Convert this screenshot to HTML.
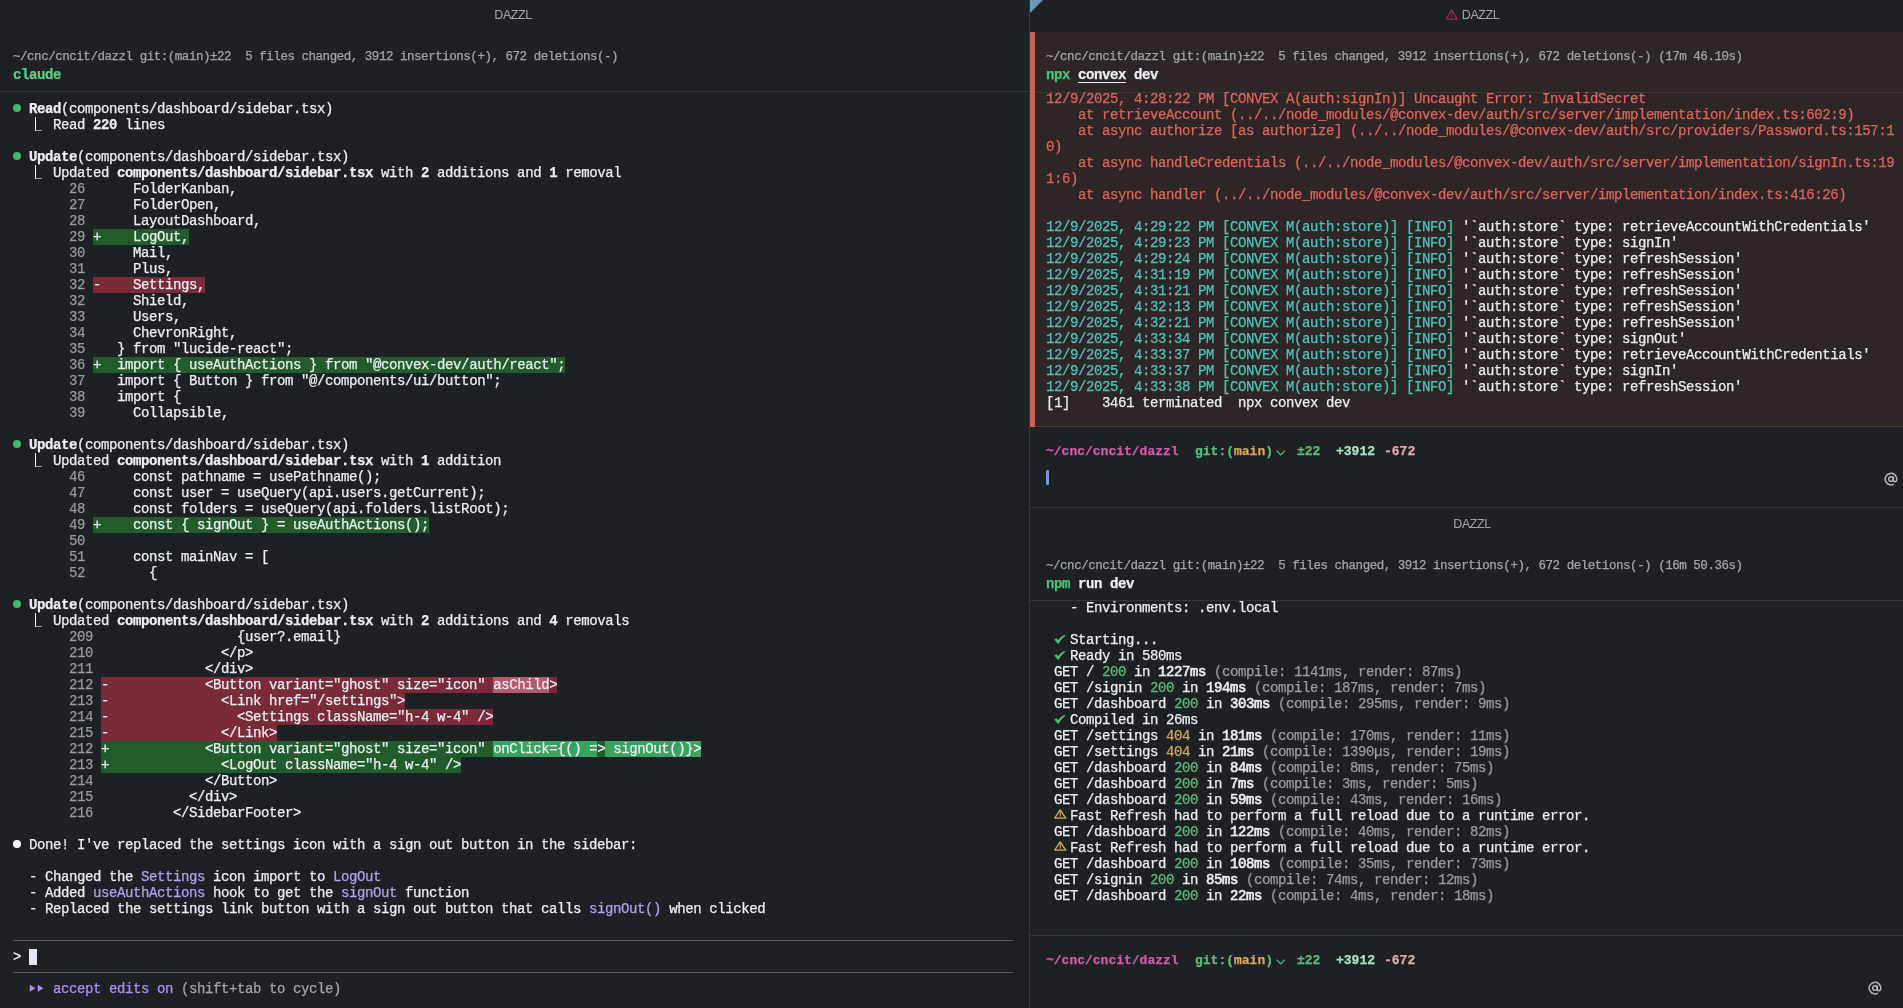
<!DOCTYPE html><html><head><meta charset="utf-8"><style>
html,body{margin:0;padding:0;background:#1e2124;width:1903px;height:1008px;overflow:hidden;}
body{position:relative;font-family:"Liberation Mono",monospace;color:#eceff4;-webkit-font-smoothing:antialiased;}
#root{position:absolute;left:0;top:0;width:1903px;height:1008px;will-change:transform;}
.t{position:absolute;white-space:pre;font-family:"Liberation Mono",monospace;-webkit-text-stroke:0.25px currentColor;}
.ttl{position:absolute;width:200px;text-align:center;font-family:"Liberation Sans",sans-serif;font-size:12.5px;line-height:16px;letter-spacing:-0.45px;color:#a3a6aa;}
.warn{display:inline-block;margin-right:4px;vertical-align:-1px;}
</style></head><body><div id="root">
<div style="position:absolute;left:1029px;top:0px;width:1px;height:1008px;background:#34373b;"></div>
<div class="ttl" style="left:413px;top:7px;">DAZZL</div>
<div class="t" style="left:13px;top:48.7px;font-size:12.5px;line-height:16px;letter-spacing:-0.465px;"><span style="color:#a3a6aa;">~/cnc/cncit/dazzl git:(main)±22  5 files changed, 3912 insertions(+), 672 deletions(-)</span></div>
<div class="t" style="left:13px;top:67.0px;font-size:14.0px;line-height:16px;letter-spacing:-0.4px;"><span style="color:#58d086;font-weight:bold;">claude</span></div>
<div style="position:absolute;left:0px;top:91px;width:1029px;height:1px;background:#34373b;"></div>
<div style="position:absolute;left:13px;top:104.3px;width:8px;height:8px;background:#48b968;border-radius:50%;"></div>
<div class="t" style="left:13px;top:101.0px;font-size:14.0px;line-height:16px;letter-spacing:-0.4px;">  <span style="color:#eceff4;font-weight:bold;">Read</span><span style="color:#eceff4;">(components/dashboard/sidebar.tsx)</span></div>
<div style="position:absolute;left:35px;top:117px;width:1px;height:14px;background:#eceff4;"></div>
<div style="position:absolute;left:36px;top:130px;width:6px;height:1px;background:#9a9ca0;"></div>
<div class="t" style="left:13px;top:117.0px;font-size:14.0px;line-height:16px;letter-spacing:-0.4px;"><span style="color:#eceff4;">     Read </span><span style="color:#eceff4;font-weight:bold;">220</span><span style="color:#eceff4;"> lines</span></div>
<div style="position:absolute;left:13px;top:152.3px;width:8px;height:8px;background:#48b968;border-radius:50%;"></div>
<div class="t" style="left:13px;top:149.0px;font-size:14.0px;line-height:16px;letter-spacing:-0.4px;">  <span style="color:#eceff4;font-weight:bold;">Update</span><span style="color:#eceff4;">(components/dashboard/sidebar.tsx)</span></div>
<div style="position:absolute;left:35px;top:165px;width:1px;height:14px;background:#eceff4;"></div>
<div style="position:absolute;left:36px;top:178px;width:6px;height:1px;background:#9a9ca0;"></div>
<div class="t" style="left:13px;top:165.0px;font-size:14.0px;line-height:16px;letter-spacing:-0.4px;"><span style="color:#eceff4;">     Updated </span><span style="color:#eceff4;font-weight:bold;">components/dashboard/sidebar.tsx</span><span style="color:#eceff4;"> with </span><span style="color:#eceff4;font-weight:bold;">2</span><span style="color:#eceff4;"> additions and </span><span style="color:#eceff4;font-weight:bold;">1</span><span style="color:#eceff4;"> removal</span></div>
<div class="t" style="left:13px;top:181.0px;font-size:14.0px;line-height:16px;letter-spacing:-0.4px;">       <span style="color:#9a9b9d;">26</span> <span style="color:#eceff4;"> </span><span style="color:#eceff4;">    FolderKanban,</span></div>
<div class="t" style="left:13px;top:197.0px;font-size:14.0px;line-height:16px;letter-spacing:-0.4px;">       <span style="color:#9a9b9d;">27</span> <span style="color:#eceff4;"> </span><span style="color:#eceff4;">    FolderOpen,</span></div>
<div class="t" style="left:13px;top:213.0px;font-size:14.0px;line-height:16px;letter-spacing:-0.4px;">       <span style="color:#9a9b9d;">28</span> <span style="color:#eceff4;"> </span><span style="color:#eceff4;">    LayoutDashboard,</span></div>
<div style="position:absolute;left:93.0px;top:229px;width:96.0px;height:16px;background:#225c2c;"></div>
<div class="t" style="left:13px;top:229.0px;font-size:14.0px;line-height:16px;letter-spacing:-0.4px;">       <span style="color:#9a9b9d;">29</span> <span style="color:#eceff4;">+</span><span style="color:#eceff4;">    LogOut,</span></div>
<div class="t" style="left:13px;top:245.0px;font-size:14.0px;line-height:16px;letter-spacing:-0.4px;">       <span style="color:#9a9b9d;">30</span> <span style="color:#eceff4;"> </span><span style="color:#eceff4;">    Mail,</span></div>
<div class="t" style="left:13px;top:261.0px;font-size:14.0px;line-height:16px;letter-spacing:-0.4px;">       <span style="color:#9a9b9d;">31</span> <span style="color:#eceff4;"> </span><span style="color:#eceff4;">    Plus,</span></div>
<div style="position:absolute;left:93.0px;top:277px;width:112.0px;height:16px;background:#7b2a37;"></div>
<div class="t" style="left:13px;top:277.0px;font-size:14.0px;line-height:16px;letter-spacing:-0.4px;">       <span style="color:#9a9b9d;">32</span> <span style="color:#eceff4;">-</span><span style="color:#eceff4;">    Settings,</span></div>
<div class="t" style="left:13px;top:293.0px;font-size:14.0px;line-height:16px;letter-spacing:-0.4px;">       <span style="color:#9a9b9d;">32</span> <span style="color:#eceff4;"> </span><span style="color:#eceff4;">    Shield,</span></div>
<div class="t" style="left:13px;top:309.0px;font-size:14.0px;line-height:16px;letter-spacing:-0.4px;">       <span style="color:#9a9b9d;">33</span> <span style="color:#eceff4;"> </span><span style="color:#eceff4;">    Users,</span></div>
<div class="t" style="left:13px;top:325.0px;font-size:14.0px;line-height:16px;letter-spacing:-0.4px;">       <span style="color:#9a9b9d;">34</span> <span style="color:#eceff4;"> </span><span style="color:#eceff4;">    ChevronRight,</span></div>
<div class="t" style="left:13px;top:341.0px;font-size:14.0px;line-height:16px;letter-spacing:-0.4px;">       <span style="color:#9a9b9d;">35</span> <span style="color:#eceff4;"> </span><span style="color:#eceff4;">  } from "lucide-react";</span></div>
<div style="position:absolute;left:93.0px;top:357px;width:472.0px;height:16px;background:#225c2c;"></div>
<div class="t" style="left:13px;top:357.0px;font-size:14.0px;line-height:16px;letter-spacing:-0.4px;">       <span style="color:#9a9b9d;">36</span> <span style="color:#eceff4;">+</span><span style="color:#eceff4;">  import { useAuthActions } from "@convex-dev/auth/react";</span></div>
<div class="t" style="left:13px;top:373.0px;font-size:14.0px;line-height:16px;letter-spacing:-0.4px;">       <span style="color:#9a9b9d;">37</span> <span style="color:#eceff4;"> </span><span style="color:#eceff4;">  import { Button } from "@/components/ui/button";</span></div>
<div class="t" style="left:13px;top:389.0px;font-size:14.0px;line-height:16px;letter-spacing:-0.4px;">       <span style="color:#9a9b9d;">38</span> <span style="color:#eceff4;"> </span><span style="color:#eceff4;">  import {</span></div>
<div class="t" style="left:13px;top:405.0px;font-size:14.0px;line-height:16px;letter-spacing:-0.4px;">       <span style="color:#9a9b9d;">39</span> <span style="color:#eceff4;"> </span><span style="color:#eceff4;">    Collapsible,</span></div>
<div style="position:absolute;left:13px;top:440.3px;width:8px;height:8px;background:#48b968;border-radius:50%;"></div>
<div class="t" style="left:13px;top:437.0px;font-size:14.0px;line-height:16px;letter-spacing:-0.4px;">  <span style="color:#eceff4;font-weight:bold;">Update</span><span style="color:#eceff4;">(components/dashboard/sidebar.tsx)</span></div>
<div style="position:absolute;left:35px;top:453px;width:1px;height:14px;background:#eceff4;"></div>
<div style="position:absolute;left:36px;top:466px;width:6px;height:1px;background:#9a9ca0;"></div>
<div class="t" style="left:13px;top:453.0px;font-size:14.0px;line-height:16px;letter-spacing:-0.4px;"><span style="color:#eceff4;">     Updated </span><span style="color:#eceff4;font-weight:bold;">components/dashboard/sidebar.tsx</span><span style="color:#eceff4;"> with </span><span style="color:#eceff4;font-weight:bold;">1</span><span style="color:#eceff4;"> addition</span></div>
<div class="t" style="left:13px;top:469.0px;font-size:14.0px;line-height:16px;letter-spacing:-0.4px;">       <span style="color:#9a9b9d;">46</span> <span style="color:#eceff4;"> </span><span style="color:#eceff4;">    const pathname = usePathname();</span></div>
<div class="t" style="left:13px;top:485.0px;font-size:14.0px;line-height:16px;letter-spacing:-0.4px;">       <span style="color:#9a9b9d;">47</span> <span style="color:#eceff4;"> </span><span style="color:#eceff4;">    const user = useQuery(api.users.getCurrent);</span></div>
<div class="t" style="left:13px;top:501.0px;font-size:14.0px;line-height:16px;letter-spacing:-0.4px;">       <span style="color:#9a9b9d;">48</span> <span style="color:#eceff4;"> </span><span style="color:#eceff4;">    const folders = useQuery(api.folders.listRoot);</span></div>
<div style="position:absolute;left:93.0px;top:517px;width:336.0px;height:16px;background:#225c2c;"></div>
<div class="t" style="left:13px;top:517.0px;font-size:14.0px;line-height:16px;letter-spacing:-0.4px;">       <span style="color:#9a9b9d;">49</span> <span style="color:#eceff4;">+</span><span style="color:#eceff4;">    const { signOut } = useAuthActions();</span></div>
<div class="t" style="left:13px;top:533.0px;font-size:14.0px;line-height:16px;letter-spacing:-0.4px;">       <span style="color:#9a9b9d;">50</span> <span style="color:#eceff4;"> </span><span style="color:#eceff4;"></span></div>
<div class="t" style="left:13px;top:549.0px;font-size:14.0px;line-height:16px;letter-spacing:-0.4px;">       <span style="color:#9a9b9d;">51</span> <span style="color:#eceff4;"> </span><span style="color:#eceff4;">    const mainNav = [</span></div>
<div class="t" style="left:13px;top:565.0px;font-size:14.0px;line-height:16px;letter-spacing:-0.4px;">       <span style="color:#9a9b9d;">52</span> <span style="color:#eceff4;"> </span><span style="color:#eceff4;">      {</span></div>
<div style="position:absolute;left:13px;top:600.3px;width:8px;height:8px;background:#48b968;border-radius:50%;"></div>
<div class="t" style="left:13px;top:597.0px;font-size:14.0px;line-height:16px;letter-spacing:-0.4px;">  <span style="color:#eceff4;font-weight:bold;">Update</span><span style="color:#eceff4;">(components/dashboard/sidebar.tsx)</span></div>
<div style="position:absolute;left:35px;top:613px;width:1px;height:14px;background:#eceff4;"></div>
<div style="position:absolute;left:36px;top:626px;width:6px;height:1px;background:#9a9ca0;"></div>
<div class="t" style="left:13px;top:613.0px;font-size:14.0px;line-height:16px;letter-spacing:-0.4px;"><span style="color:#eceff4;">     Updated </span><span style="color:#eceff4;font-weight:bold;">components/dashboard/sidebar.tsx</span><span style="color:#eceff4;"> with </span><span style="color:#eceff4;font-weight:bold;">2</span><span style="color:#eceff4;"> additions and </span><span style="color:#eceff4;font-weight:bold;">4</span><span style="color:#eceff4;"> removals</span></div>
<div class="t" style="left:13px;top:629.0px;font-size:14.0px;line-height:16px;letter-spacing:-0.4px;">       <span style="color:#9a9b9d;">209</span> <span style="color:#eceff4;"> </span><span style="color:#eceff4;">                {user?.email}</span></div>
<div class="t" style="left:13px;top:645.0px;font-size:14.0px;line-height:16px;letter-spacing:-0.4px;">       <span style="color:#9a9b9d;">210</span> <span style="color:#eceff4;"> </span><span style="color:#eceff4;">              &lt;/p&gt;</span></div>
<div class="t" style="left:13px;top:661.0px;font-size:14.0px;line-height:16px;letter-spacing:-0.4px;">       <span style="color:#9a9b9d;">211</span> <span style="color:#eceff4;"> </span><span style="color:#eceff4;">            &lt;/div&gt;</span></div>
<div style="position:absolute;left:101.0px;top:677px;width:456.0px;height:16px;background:#7b2a37;"></div>
<div style="position:absolute;left:493.0px;top:677px;width:56.0px;height:16px;background:#b65b6b;"></div>
<div class="t" style="left:13px;top:677.0px;font-size:14.0px;line-height:16px;letter-spacing:-0.4px;">       <span style="color:#9a9b9d;">212</span> <span style="color:#eceff4;">-</span><span style="color:#eceff4;">            &lt;Button variant="ghost" size="icon" asChild&gt;</span></div>
<div style="position:absolute;left:101.0px;top:693px;width:304.0px;height:16px;background:#7b2a37;"></div>
<div class="t" style="left:13px;top:693.0px;font-size:14.0px;line-height:16px;letter-spacing:-0.4px;">       <span style="color:#9a9b9d;">213</span> <span style="color:#eceff4;">-</span><span style="color:#eceff4;">              &lt;Link href="/settings"&gt;</span></div>
<div style="position:absolute;left:101.0px;top:709px;width:392.0px;height:16px;background:#7b2a37;"></div>
<div class="t" style="left:13px;top:709.0px;font-size:14.0px;line-height:16px;letter-spacing:-0.4px;">       <span style="color:#9a9b9d;">214</span> <span style="color:#eceff4;">-</span><span style="color:#eceff4;">                &lt;Settings className="h-4 w-4" /&gt;</span></div>
<div style="position:absolute;left:101.0px;top:725px;width:176.0px;height:16px;background:#7b2a37;"></div>
<div class="t" style="left:13px;top:725.0px;font-size:14.0px;line-height:16px;letter-spacing:-0.4px;">       <span style="color:#9a9b9d;">215</span> <span style="color:#eceff4;">-</span><span style="color:#eceff4;">              &lt;/Link&gt;</span></div>
<div style="position:absolute;left:101.0px;top:741px;width:600.0px;height:16px;background:#225c2c;"></div>
<div style="position:absolute;left:493.0px;top:741px;width:104.0px;height:16px;background:#38a35e;"></div>
<div style="position:absolute;left:605.0px;top:741px;width:96.0px;height:16px;background:#38a35e;"></div>
<div class="t" style="left:13px;top:741.0px;font-size:14.0px;line-height:16px;letter-spacing:-0.4px;">       <span style="color:#9a9b9d;">212</span> <span style="color:#eceff4;">+</span><span style="color:#eceff4;">            &lt;Button variant="ghost" size="icon" onClick={() =&gt; signOut()}&gt;</span></div>
<div style="position:absolute;left:101.0px;top:757px;width:360.0px;height:16px;background:#225c2c;"></div>
<div class="t" style="left:13px;top:757.0px;font-size:14.0px;line-height:16px;letter-spacing:-0.4px;">       <span style="color:#9a9b9d;">213</span> <span style="color:#eceff4;">+</span><span style="color:#eceff4;">              &lt;LogOut className="h-4 w-4" /&gt;</span></div>
<div class="t" style="left:13px;top:773.0px;font-size:14.0px;line-height:16px;letter-spacing:-0.4px;">       <span style="color:#9a9b9d;">214</span> <span style="color:#eceff4;"> </span><span style="color:#eceff4;">            &lt;/Button&gt;</span></div>
<div class="t" style="left:13px;top:789.0px;font-size:14.0px;line-height:16px;letter-spacing:-0.4px;">       <span style="color:#9a9b9d;">215</span> <span style="color:#eceff4;"> </span><span style="color:#eceff4;">          &lt;/div&gt;</span></div>
<div class="t" style="left:13px;top:805.0px;font-size:14.0px;line-height:16px;letter-spacing:-0.4px;">       <span style="color:#9a9b9d;">216</span> <span style="color:#eceff4;"> </span><span style="color:#eceff4;">        &lt;/SidebarFooter&gt;</span></div>
<div style="position:absolute;left:13px;top:840.3px;width:8px;height:8px;background:#ffffff;border-radius:50%;"></div>
<div class="t" style="left:13px;top:837.0px;font-size:14.0px;line-height:16px;letter-spacing:-0.4px;"><span style="color:#eceff4;">  Done! I've replaced the settings icon with a sign out button in the sidebar:</span></div>
<div class="t" style="left:13px;top:869.0px;font-size:14.0px;line-height:16px;letter-spacing:-0.4px;"><span style="color:#eceff4;">  - Changed the </span><span style="color:#aaa5f2;">Settings</span><span style="color:#eceff4;"> icon import to </span><span style="color:#aaa5f2;">LogOut</span></div>
<div class="t" style="left:13px;top:885.0px;font-size:14.0px;line-height:16px;letter-spacing:-0.4px;"><span style="color:#eceff4;">  - Added </span><span style="color:#aaa5f2;">useAuthActions</span><span style="color:#eceff4;"> hook to get the </span><span style="color:#aaa5f2;">signOut</span><span style="color:#eceff4;"> function</span></div>
<div class="t" style="left:13px;top:901.0px;font-size:14.0px;line-height:16px;letter-spacing:-0.4px;"><span style="color:#eceff4;">  - Replaced the settings link button with a sign out button that calls </span><span style="color:#aaa5f2;">signOut()</span><span style="color:#eceff4;"> when clicked</span></div>
<div style="position:absolute;left:13px;top:940px;width:1000px;height:1px;background:#5a5d61;"></div>
<div style="position:absolute;left:13px;top:972px;width:1000px;height:1px;background:#5a5d61;"></div>
<div class="t" style="left:13px;top:949.0px;font-size:14.0px;line-height:16px;letter-spacing:-0.4px;"><span style="color:#eceff4;">&gt;</span></div>
<div style="position:absolute;left:29px;top:949px;width:8px;height:16px;background:#e2eaf7;"></div>
<svg style="position:absolute;left:29px;top:984px" width="16" height="9"><path d="M0.8,0.8 L6.5,4.2 L0.8,7.8 Z M8.8,0.8 L14.5,4.2 L8.8,7.8 Z" fill="#b48cf8"/></svg>
<div class="t" style="left:13px;top:981.0px;font-size:14.0px;line-height:16px;letter-spacing:-0.4px;">     <span style="color:#b48cf8;">accept edits on</span><span style="color:#a3a6aa;"> (shift+tab to cycle)</span></div>
<div class="ttl" style="left:1372px;top:7px;"><svg class="warn" width="13" height="12" viewBox="0 0 13 12"><path d="M6.6,1.9 L12.1,11.2 L1.1,11.2 Z" fill="none" stroke="#a3293b" stroke-width="1.3" stroke-linejoin="round"/><rect x="6.1" y="4.8" width="1" height="3.2" fill="#a3293b"/><rect x="6.1" y="8.8" width="1" height="1" fill="#a3293b"/></svg>DAZZL</div>
<svg style="position:absolute;left:1030px;top:0" width="14" height="14"><polygon points="0,0 13,0 0,13" fill="#6e97ba"/></svg>
<div style="position:absolute;left:1030px;top:32px;width:873px;height:395px;background:#2e2526;"></div>
<div style="position:absolute;left:1030px;top:32px;width:5px;height:395px;background:#c96357;"></div>
<div class="t" style="left:1046px;top:48.7px;font-size:12.5px;line-height:16px;letter-spacing:-0.465px;"><span style="color:#a3a6aa;">~/cnc/cncit/dazzl git:(main)±22  5 files changed, 3912 insertions(+), 672 deletions(-) (17m 46.10s)</span></div>
<div class="t" style="left:1046px;top:67.0px;font-size:14.0px;line-height:16px;letter-spacing:-0.4px;"><span style="color:#50c27c;font-weight:bold;">npx</span> <span style="color:#eceff4;font-weight:bold;text-decoration:underline;text-underline-offset:3px;">convex</span><span style="color:#eceff4;font-weight:bold;"> dev</span></div>
<div style="position:absolute;left:1035px;top:92px;width:868px;height:1px;background:#3d3536;"></div>
<div class="t" style="left:1046px;top:91.0px;font-size:14.0px;line-height:16px;letter-spacing:-0.4px;"><span style="color:#da6a5e;">12/9/2025, 4:28:22 PM [CONVEX A(auth:signIn)] Uncaught Error: InvalidSecret</span></div>
<div class="t" style="left:1046px;top:107.0px;font-size:14.0px;line-height:16px;letter-spacing:-0.4px;"><span style="color:#da6a5e;">    at retrieveAccount (../../node_modules/@convex-dev/auth/src/server/implementation/index.ts:602:9)</span></div>
<div class="t" style="left:1046px;top:123.0px;font-size:14.0px;line-height:16px;letter-spacing:-0.4px;"><span style="color:#da6a5e;">    at async authorize [as authorize] (../../node_modules/@convex-dev/auth/src/providers/Password.ts:157:1</span></div>
<div class="t" style="left:1046px;top:139.0px;font-size:14.0px;line-height:16px;letter-spacing:-0.4px;"><span style="color:#da6a5e;">0)</span></div>
<div class="t" style="left:1046px;top:155.0px;font-size:14.0px;line-height:16px;letter-spacing:-0.4px;"><span style="color:#da6a5e;">    at async handleCredentials (../../node_modules/@convex-dev/auth/src/server/implementation/signIn.ts:19</span></div>
<div class="t" style="left:1046px;top:171.0px;font-size:14.0px;line-height:16px;letter-spacing:-0.4px;"><span style="color:#da6a5e;">1:6)</span></div>
<div class="t" style="left:1046px;top:187.0px;font-size:14.0px;line-height:16px;letter-spacing:-0.4px;"><span style="color:#da6a5e;">    at async handler (../../node_modules/@convex-dev/auth/src/server/implementation/index.ts:416:26)</span></div>
<div class="t" style="left:1046px;top:219.0px;font-size:14.0px;line-height:16px;letter-spacing:-0.4px;"><span style="color:#50c5bb;">12/9/2025, 4:29:22 PM [CONVEX M(auth:store)] [INFO] </span><span style="color:#eceff4;">'`auth:store` type: retrieveAccountWithCredentials'</span></div>
<div class="t" style="left:1046px;top:235.0px;font-size:14.0px;line-height:16px;letter-spacing:-0.4px;"><span style="color:#50c5bb;">12/9/2025, 4:29:23 PM [CONVEX M(auth:store)] [INFO] </span><span style="color:#eceff4;">'`auth:store` type: signIn'</span></div>
<div class="t" style="left:1046px;top:251.0px;font-size:14.0px;line-height:16px;letter-spacing:-0.4px;"><span style="color:#50c5bb;">12/9/2025, 4:29:24 PM [CONVEX M(auth:store)] [INFO] </span><span style="color:#eceff4;">'`auth:store` type: refreshSession'</span></div>
<div class="t" style="left:1046px;top:267.0px;font-size:14.0px;line-height:16px;letter-spacing:-0.4px;"><span style="color:#50c5bb;">12/9/2025, 4:31:19 PM [CONVEX M(auth:store)] [INFO] </span><span style="color:#eceff4;">'`auth:store` type: refreshSession'</span></div>
<div class="t" style="left:1046px;top:283.0px;font-size:14.0px;line-height:16px;letter-spacing:-0.4px;"><span style="color:#50c5bb;">12/9/2025, 4:31:21 PM [CONVEX M(auth:store)] [INFO] </span><span style="color:#eceff4;">'`auth:store` type: refreshSession'</span></div>
<div class="t" style="left:1046px;top:299.0px;font-size:14.0px;line-height:16px;letter-spacing:-0.4px;"><span style="color:#50c5bb;">12/9/2025, 4:32:13 PM [CONVEX M(auth:store)] [INFO] </span><span style="color:#eceff4;">'`auth:store` type: refreshSession'</span></div>
<div class="t" style="left:1046px;top:315.0px;font-size:14.0px;line-height:16px;letter-spacing:-0.4px;"><span style="color:#50c5bb;">12/9/2025, 4:32:21 PM [CONVEX M(auth:store)] [INFO] </span><span style="color:#eceff4;">'`auth:store` type: refreshSession'</span></div>
<div class="t" style="left:1046px;top:331.0px;font-size:14.0px;line-height:16px;letter-spacing:-0.4px;"><span style="color:#50c5bb;">12/9/2025, 4:33:34 PM [CONVEX M(auth:store)] [INFO] </span><span style="color:#eceff4;">'`auth:store` type: signOut'</span></div>
<div class="t" style="left:1046px;top:347.0px;font-size:14.0px;line-height:16px;letter-spacing:-0.4px;"><span style="color:#50c5bb;">12/9/2025, 4:33:37 PM [CONVEX M(auth:store)] [INFO] </span><span style="color:#eceff4;">'`auth:store` type: retrieveAccountWithCredentials'</span></div>
<div class="t" style="left:1046px;top:363.0px;font-size:14.0px;line-height:16px;letter-spacing:-0.4px;"><span style="color:#50c5bb;">12/9/2025, 4:33:37 PM [CONVEX M(auth:store)] [INFO] </span><span style="color:#eceff4;">'`auth:store` type: signIn'</span></div>
<div class="t" style="left:1046px;top:379.0px;font-size:14.0px;line-height:16px;letter-spacing:-0.4px;"><span style="color:#50c5bb;">12/9/2025, 4:33:38 PM [CONVEX M(auth:store)] [INFO] </span><span style="color:#eceff4;">'`auth:store` type: refreshSession'</span></div>
<div class="t" style="left:1046px;top:395.0px;font-size:14.0px;line-height:16px;letter-spacing:-0.4px;"><span style="color:#eceff4;">[1]    3461 terminated  npx convex dev</span></div>
<div style="position:absolute;left:1035px;top:426px;width:868px;height:1px;background:#403738;"></div>
<div class="t" style="left:1046px;top:444.0px;font-size:13.0px;line-height:16px;letter-spacing:0px;"><span style="color:#d55aac;font-weight:bold;">~/cnc/cncit/dazzl</span></div>
<div class="t" style="left:1195px;top:444.0px;font-size:13.0px;line-height:16px;letter-spacing:0px;"><span style="color:#50c27c;font-weight:bold;">git:(</span><span style="color:#d6a85a;font-weight:bold;">main</span><span style="color:#50c27c;font-weight:bold;">)</span></div>
<svg style="position:absolute;left:1276px;top:449.5px" width="10" height="7"><polyline points="0.6,0.6 4.8,4.8 9,0.6" fill="none" stroke="#50c27c" stroke-width="1.2"/></svg>
<div class="t" style="left:1297px;top:444.0px;font-size:13.0px;line-height:16px;letter-spacing:0px;"><span style="color:#50c27c;font-weight:bold;">±22</span></div>
<div class="t" style="left:1336px;top:444.0px;font-size:13.0px;line-height:16px;letter-spacing:0px;"><span style="color:#a8e2bd;font-weight:bold;">+3912</span></div>
<div class="t" style="left:1384px;top:444.0px;font-size:13.0px;line-height:16px;letter-spacing:0px;"><span style="color:#e6a9ad;font-weight:bold;">-672</span></div>
<div style="position:absolute;left:1046px;top:470px;width:3px;height:15px;background:#6f9cc9;border-radius:1px;"></div>
<svg style="position:absolute;left:1883.5px;top:471.5px" width="14" height="14"><g fill="none" stroke="#b3b6ba" stroke-width="1.5"><circle cx="7" cy="7" r="2.3"/><path d="M9.3,4.4 V7.9 Q9.3,9.7 10.9,9.7 Q12.8,9.7 12.8,7 A5.8,5.8 0 1 0 9.8,12.2"/></g></svg>
<div style="position:absolute;left:1030px;top:507px;width:873px;height:1px;background:#34373b;"></div>
<div class="ttl" style="left:1372px;top:516px;">DAZZL</div>
<div class="t" style="left:1046px;top:557.7px;font-size:12.5px;line-height:16px;letter-spacing:-0.465px;"><span style="color:#a3a6aa;">~/cnc/cncit/dazzl git:(main)±22  5 files changed, 3912 insertions(+), 672 deletions(-) (16m 50.36s)</span></div>
<div class="t" style="left:1046px;top:576.0px;font-size:14.0px;line-height:16px;letter-spacing:-0.4px;"><span style="color:#50c27c;font-weight:bold;">npm</span><span style="color:#eceff4;font-weight:bold;"> run dev</span></div>
<div style="position:absolute;left:1030px;top:600px;width:873px;height:1px;background:#34373b;"></div>
<div class="t" style="left:1046px;top:600.0px;font-size:14.0px;line-height:16px;letter-spacing:-0.4px;"><span style="color:#eceff4;">   - Environments: .env.local</span></div>
<svg style="position:absolute;left:1054px;top:631px" width="12" height="16"><path d="M0.3,8.5 L2.6,7.3 L3.8,9.5 Q6.6,5.2 10.9,3.9 L11.3,4.8 Q7.9,7.3 4.1,13 Z" fill="#50c27c"/></svg>
<svg style="position:absolute;left:1054px;top:647px" width="12" height="16"><path d="M0.3,8.5 L2.6,7.3 L3.8,9.5 Q6.6,5.2 10.9,3.9 L11.3,4.8 Q7.9,7.3 4.1,13 Z" fill="#50c27c"/></svg>
<svg style="position:absolute;left:1054px;top:711px" width="12" height="16"><path d="M0.3,8.5 L2.6,7.3 L3.8,9.5 Q6.6,5.2 10.9,3.9 L11.3,4.8 Q7.9,7.3 4.1,13 Z" fill="#50c27c"/></svg>
<div class="t" style="left:1046px;top:632.0px;font-size:14.0px;line-height:16px;letter-spacing:-0.4px;">  <span style="color:#eceff4;"> Starting...</span></div>
<div class="t" style="left:1046px;top:648.0px;font-size:14.0px;line-height:16px;letter-spacing:-0.4px;">  <span style="color:#eceff4;"> Ready in 580ms</span></div>
<div class="t" style="left:1046px;top:664.0px;font-size:14.0px;line-height:16px;letter-spacing:-0.4px;"><span style="color:#eceff4;"> GET / </span><span style="color:#50c27c;">200</span><span style="color:#eceff4;"> in </span><span style="color:#eceff4;-webkit-text-stroke:0.6px currentColor;">1227ms</span><span style="color:#9a9da2;"> (compile: 1141ms, render: 87ms)</span></div>
<div class="t" style="left:1046px;top:680.0px;font-size:14.0px;line-height:16px;letter-spacing:-0.4px;"><span style="color:#eceff4;"> GET /signin </span><span style="color:#50c27c;">200</span><span style="color:#eceff4;"> in </span><span style="color:#eceff4;-webkit-text-stroke:0.6px currentColor;">194ms</span><span style="color:#9a9da2;"> (compile: 187ms, render: 7ms)</span></div>
<div class="t" style="left:1046px;top:696.0px;font-size:14.0px;line-height:16px;letter-spacing:-0.4px;"><span style="color:#eceff4;"> GET /dashboard </span><span style="color:#50c27c;">200</span><span style="color:#eceff4;"> in </span><span style="color:#eceff4;-webkit-text-stroke:0.6px currentColor;">303ms</span><span style="color:#9a9da2;"> (compile: 295ms, render: 9ms)</span></div>
<div class="t" style="left:1046px;top:712.0px;font-size:14.0px;line-height:16px;letter-spacing:-0.4px;">  <span style="color:#eceff4;"> Compiled in 26ms</span></div>
<div class="t" style="left:1046px;top:728.0px;font-size:14.0px;line-height:16px;letter-spacing:-0.4px;"><span style="color:#eceff4;"> GET /settings </span><span style="color:#d6a85a;">404</span><span style="color:#eceff4;"> in </span><span style="color:#eceff4;-webkit-text-stroke:0.6px currentColor;">181ms</span><span style="color:#9a9da2;"> (compile: 170ms, render: 11ms)</span></div>
<div class="t" style="left:1046px;top:744.0px;font-size:14.0px;line-height:16px;letter-spacing:-0.4px;"><span style="color:#eceff4;"> GET /settings </span><span style="color:#d6a85a;">404</span><span style="color:#eceff4;"> in </span><span style="color:#eceff4;-webkit-text-stroke:0.6px currentColor;">21ms</span><span style="color:#9a9da2;"> (compile: 1390µs, render: 19ms)</span></div>
<div class="t" style="left:1046px;top:760.0px;font-size:14.0px;line-height:16px;letter-spacing:-0.4px;"><span style="color:#eceff4;"> GET /dashboard </span><span style="color:#50c27c;">200</span><span style="color:#eceff4;"> in </span><span style="color:#eceff4;-webkit-text-stroke:0.6px currentColor;">84ms</span><span style="color:#9a9da2;"> (compile: 8ms, render: 75ms)</span></div>
<div class="t" style="left:1046px;top:776.0px;font-size:14.0px;line-height:16px;letter-spacing:-0.4px;"><span style="color:#eceff4;"> GET /dashboard </span><span style="color:#50c27c;">200</span><span style="color:#eceff4;"> in </span><span style="color:#eceff4;-webkit-text-stroke:0.6px currentColor;">7ms</span><span style="color:#9a9da2;"> (compile: 3ms, render: 5ms)</span></div>
<div class="t" style="left:1046px;top:792.0px;font-size:14.0px;line-height:16px;letter-spacing:-0.4px;"><span style="color:#eceff4;"> GET /dashboard </span><span style="color:#50c27c;">200</span><span style="color:#eceff4;"> in </span><span style="color:#eceff4;-webkit-text-stroke:0.6px currentColor;">59ms</span><span style="color:#9a9da2;"> (compile: 43ms, render: 16ms)</span></div>
<svg style="position:absolute;left:1053px;top:807px" width="15" height="16"><path d="M7.2,2.9 L12.7,11.1 L1.7,11.1 Z" fill="none" stroke="#d5a650" stroke-width="1.4" stroke-linejoin="round"/><rect x="6.7" y="5.4" width="1.2" height="3.4" fill="#d5a650"/><rect x="6.7" y="9.4" width="1.2" height="1" fill="#d5a650"/></svg>
<svg style="position:absolute;left:1053px;top:839px" width="15" height="16"><path d="M7.2,2.9 L12.7,11.1 L1.7,11.1 Z" fill="none" stroke="#d5a650" stroke-width="1.4" stroke-linejoin="round"/><rect x="6.7" y="5.4" width="1.2" height="3.4" fill="#d5a650"/><rect x="6.7" y="9.4" width="1.2" height="1" fill="#d5a650"/></svg>
<div class="t" style="left:1046px;top:808.0px;font-size:14.0px;line-height:16px;letter-spacing:-0.4px;">  <span style="color:#eceff4;"> Fast Refresh had to perform a full reload due to a runtime error.</span></div>
<div class="t" style="left:1046px;top:824.0px;font-size:14.0px;line-height:16px;letter-spacing:-0.4px;"><span style="color:#eceff4;"> GET /dashboard </span><span style="color:#50c27c;">200</span><span style="color:#eceff4;"> in </span><span style="color:#eceff4;-webkit-text-stroke:0.6px currentColor;">122ms</span><span style="color:#9a9da2;"> (compile: 40ms, render: 82ms)</span></div>
<div class="t" style="left:1046px;top:840.0px;font-size:14.0px;line-height:16px;letter-spacing:-0.4px;">  <span style="color:#eceff4;"> Fast Refresh had to perform a full reload due to a runtime error.</span></div>
<div class="t" style="left:1046px;top:856.0px;font-size:14.0px;line-height:16px;letter-spacing:-0.4px;"><span style="color:#eceff4;"> GET /dashboard </span><span style="color:#50c27c;">200</span><span style="color:#eceff4;"> in </span><span style="color:#eceff4;-webkit-text-stroke:0.6px currentColor;">108ms</span><span style="color:#9a9da2;"> (compile: 35ms, render: 73ms)</span></div>
<div class="t" style="left:1046px;top:872.0px;font-size:14.0px;line-height:16px;letter-spacing:-0.4px;"><span style="color:#eceff4;"> GET /signin </span><span style="color:#50c27c;">200</span><span style="color:#eceff4;"> in </span><span style="color:#eceff4;-webkit-text-stroke:0.6px currentColor;">85ms</span><span style="color:#9a9da2;"> (compile: 74ms, render: 12ms)</span></div>
<div class="t" style="left:1046px;top:888.0px;font-size:14.0px;line-height:16px;letter-spacing:-0.4px;"><span style="color:#eceff4;"> GET /dashboard </span><span style="color:#50c27c;">200</span><span style="color:#eceff4;"> in </span><span style="color:#eceff4;-webkit-text-stroke:0.6px currentColor;">22ms</span><span style="color:#9a9da2;"> (compile: 4ms, render: 18ms)</span></div>
<div style="position:absolute;left:1030px;top:935px;width:873px;height:1px;background:#34373b;"></div>
<div class="t" style="left:1046px;top:953.0px;font-size:13.0px;line-height:16px;letter-spacing:0px;"><span style="color:#d55aac;font-weight:bold;">~/cnc/cncit/dazzl</span></div>
<div class="t" style="left:1195px;top:953.0px;font-size:13.0px;line-height:16px;letter-spacing:0px;"><span style="color:#50c27c;font-weight:bold;">git:(</span><span style="color:#d6a85a;font-weight:bold;">main</span><span style="color:#50c27c;font-weight:bold;">)</span></div>
<svg style="position:absolute;left:1276px;top:958.5px" width="10" height="7"><polyline points="0.6,0.6 4.8,4.8 9,0.6" fill="none" stroke="#50c27c" stroke-width="1.2"/></svg>
<div class="t" style="left:1297px;top:953.0px;font-size:13.0px;line-height:16px;letter-spacing:0px;"><span style="color:#50c27c;font-weight:bold;">±22</span></div>
<div class="t" style="left:1336px;top:953.0px;font-size:13.0px;line-height:16px;letter-spacing:0px;"><span style="color:#a8e2bd;font-weight:bold;">+3912</span></div>
<div class="t" style="left:1384px;top:953.0px;font-size:13.0px;line-height:16px;letter-spacing:0px;"><span style="color:#e6a9ad;font-weight:bold;">-672</span></div>
<svg style="position:absolute;left:1867.5px;top:980.5px" width="14" height="14"><g fill="none" stroke="#b3b6ba" stroke-width="1.5"><circle cx="7" cy="7" r="2.3"/><path d="M9.3,4.4 V7.9 Q9.3,9.7 10.9,9.7 Q12.8,9.7 12.8,7 A5.8,5.8 0 1 0 9.8,12.2"/></g></svg>
</div></body></html>
